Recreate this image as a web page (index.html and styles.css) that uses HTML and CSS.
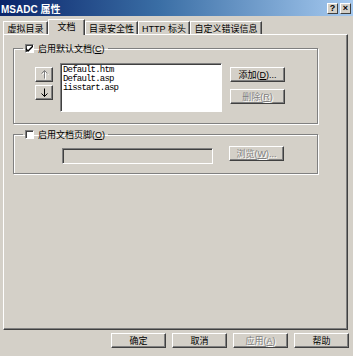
FILE: index.html
```html
<!DOCTYPE html>
<html lang="zh-cn">
<head>
  <meta charset="UTF-8" />
  <title>MSADC 属性</title>
  <link rel="stylesheet" href="styles.css">
</head>
<body>
  <div class="window">
    <div class="titlebar">
      <span class="title">MSADC 属性</span>
      <div class="caption-btns">
        <span class="cap-btn">?</span>
        <span class="cap-btn">×</span>
      </div>
    </div>

    <div class="tabs">
      <div class="tab t1">虚拟目录</div>
      <div class="tab t2 active">文档</div>
      <div class="tab t3">目录安全性</div>
      <div class="tab t4">HTTP 标头</div>
      <div class="tab t5">自定义错误信息</div>
    </div>

    <div class="panel">
      <fieldset class="group group-docs">
        <legend><span class="check checked"><svg width="7" height="7" viewBox="0 0 7 7"><path d="M0 3 L2 5 L7 0 L7 2 L2 7 L0 5 Z" fill="#000"/></svg></span><span>启用默认文档(<u>C</u>)</span></legend>
        <div class="group-body">
          <div class="order-btns">
            <button class="btn arrow-btn" disabled>
              <svg width="7" height="9" viewBox="0 0 7 9"><path d="M3.5 0.5 L0.5 3.5 M3.5 0.5 L6.5 3.5 M3.5 0.5 L3.5 8.5" stroke="currentColor" fill="none"/></svg>
            </button>
            <button class="btn arrow-btn">
              <svg width="7" height="9" viewBox="0 0 7 9"><path d="M3.5 8.5 L0.5 5.5 M3.5 8.5 L6.5 5.5 M3.5 8.5 L3.5 0.5" stroke="currentColor" fill="none"/></svg>
            </button>
          </div>
          <div class="listbox">
            <div>Default.htm</div>
            <div>Default.asp</div>
            <div>iisstart.asp</div>
          </div>
          <div class="side-btns">
            <button class="btn">添加(<u>D</u>)...</button>
            <button class="btn" disabled>删除(<u>R</u>)</button>
          </div>
        </div>
      </fieldset>

      <fieldset class="group group-footer">
        <legend><span class="check"></span><span>启用文档页脚(<u>O</u>)</span></legend>
        <div class="group-body">
          <div class="path-input"></div>
          <button class="btn browse-btn" disabled>浏览(<u>W</u>)...</button>
        </div>
      </fieldset>
    </div>

    <div class="footer">
      <button class="btn dlg-btn">确定</button>
      <button class="btn dlg-btn">取消</button>
      <button class="btn dlg-btn" disabled>应用(<u>A</u>)</button>
      <button class="btn dlg-btn">帮助</button>
    </div>
  </div>
</body>
</html>
```

FILE: styles.css
```css
* {
  box-sizing: border-box;
}
body {
  margin: 0;
  background: #d4d0c8;
  font-family: "Liberation Sans", "Noto Sans CJK SC", sans-serif;
  font-size: 9px;
  color: #000;
}
.window {
  width: 353px;
  height: 356px;
  display: flex;
  flex-direction: column;
  background: #d4d0c8;
}

/* title bar */
.titlebar {
  height: 16px;
  display: flex;
  align-items: center;
  justify-content: space-between;
  padding: 0 2px 0 1px;
  background: linear-gradient(to right, #0a246a, #3a6ea5 45%, #a6caf0);
}
.title {
  color: #fff;
  font-weight: bold;
  font-size: 10px;
}
.caption-btns {
  display: flex;
  gap: 2px;
}
.cap-btn {
  width: 11px;
  height: 11px;
  display: flex;
  align-items: center;
  justify-content: center;
  background: #d4d0c8;
  border: 1px solid;
  border-color: #fff #404040 #404040 #fff;
  font-weight: bold;
  font-size: 9px;
  line-height: 1;
}

/* tabs */
.tabs {
  display: flex;
  align-items: flex-end;
  height: 18px;
  padding-left: 3px;
}
.tab {
  height: 13px;
  display: flex;
  align-items: center;
  justify-content: center;
  border-left: 1px solid #fff;
  border-top: 1px solid #fff;
  border-right: 1px solid #404040;
  box-shadow: inset -1px 0 #808080;
  white-space: nowrap;
}
.tab.active {
  height: 16px;
  margin-bottom: -1px;
  padding-bottom: 2px;
  background: #d4d0c8;
  position: relative;
}
.t1 { width: 45px; }
.t2 { width: 37px; }
.t3 { width: 53px; }
.t4 { width: 52px; }
.t5 { width: 72px; }

/* tab page */
.panel {
  width: 345px;
  height: 296px;
  margin-left: 3px;
  padding: 7px 0 0 9px;
  border-left: 1px solid #fff;
  border-top: 1px solid #fff;
  border-right: 1px solid #404040;
  border-bottom: 1px solid #404040;
  box-shadow: inset -1px -1px #808080;
}
.group {
  width: 305px;
  margin: 0;
  padding: 0;
  border: 1px solid #808080;
  box-shadow: inset 1px 1px #fff, 1px 1px #fff;
  min-inline-size: 0;
}
.group legend {
  display: flex;
  align-items: center;
  gap: 4px;
  height: 12px;
  margin-left: 9px;
  padding: 0 3px 0 2px;
  white-space: nowrap;
}
.group-docs {
  height: 82px;
}
.group-footer {
  margin-top: 4px;
  height: 46px;
}
.check {
  width: 9px;
  height: 9px;
  display: flex;
  align-items: center;
  justify-content: center;
  background: #fff;
  border: 1px solid;
  border-color: #808080 #fff #fff #808080;
  box-shadow: inset 1px 1px #404040;
}
.group-body {
  display: flex;
  align-items: flex-start;
}
.group-docs .group-body {
  padding: 9px 0 0 21px;
}
.order-btns {
  display: flex;
  flex-direction: column;
  gap: 3px;
  margin-top: 4px;
}
.listbox {
  width: 162px;
  height: 49px;
  margin-left: 7px;
  padding: 2px 0 0 2px;
  background: #fff;
  border: 1px solid;
  border-color: #808080 #fff #fff #808080;
  box-shadow: inset 1px 1px #404040;
  font-family: "Liberation Mono", monospace;
  font-size: 9px;
  letter-spacing: -0.8px;
  line-height: 9px;
}
.side-btns {
  display: flex;
  flex-direction: column;
  gap: 7px;
  margin: 4px 0 0 8px;
}
.group-footer .group-body {
  padding: 8px 0 0 48px;
}
.path-input {
  width: 151px;
  height: 16px;
  border: 1px solid;
  border-color: #808080 #fff #fff #808080;
  box-shadow: inset 1px 1px #404040;
  background: #d4d0c8;
}
.browse-btn {
  margin: -2px 0 0 16px;
}

/* buttons */
.btn {
  width: 55px;
  height: 15px;
  padding: 0;
  display: flex;
  align-items: center;
  justify-content: center;
  background: #d4d0c8;
  border: 1px solid;
  border-color: #fff #404040 #404040 #fff;
  box-shadow: inset -1px -1px #808080;
  font-family: inherit;
  font-size: 9px;
  color: #000;
  white-space: nowrap;
}
.btn:disabled {
  color: #808080;
  text-shadow: 1px 1px #fff;
}
.arrow-btn {
  width: 18px;
  height: 15px;
}
.arrow-btn:disabled svg {
  filter: drop-shadow(1px 1px 0 #fff);
}

.footer {
  display: flex;
  justify-content: flex-end;
  gap: 6px;
  padding: 3px 4px 0 0;
}
.dlg-btn {
  width: 55px;
}
```
